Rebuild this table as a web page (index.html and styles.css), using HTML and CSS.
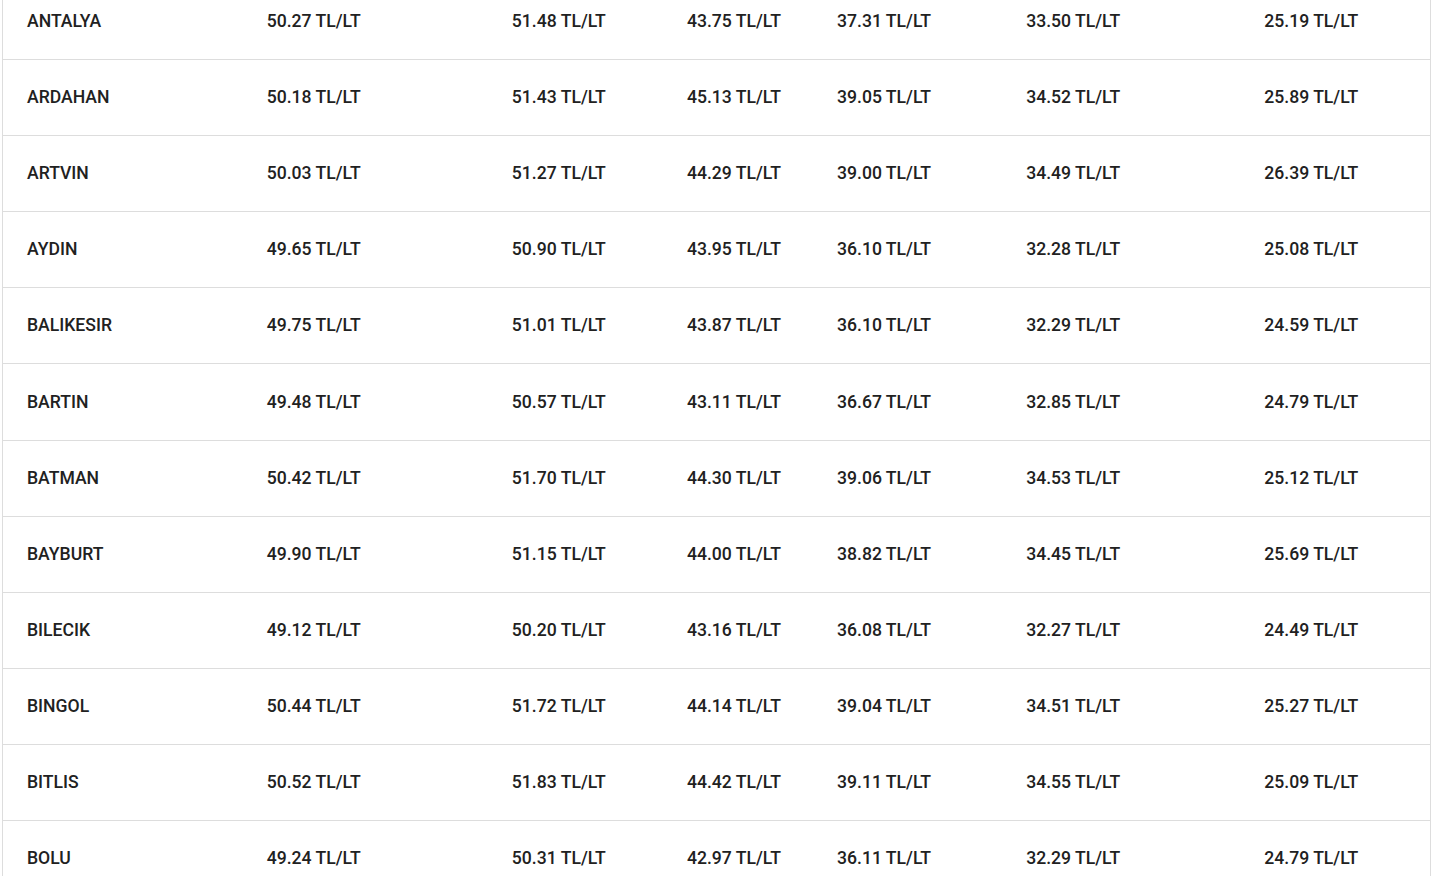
FILE: index.html
```html
<!DOCTYPE html>
<html lang="tr">
<head>
<meta charset="utf-8">
<title>Akaryakıt Fiyatları</title>
<link rel="stylesheet" href="styles.css">
</head>
<body>
<div class="wrap">
<table class="prices">
<colgroup>
<col class="c1"><col class="c2"><col class="c3"><col class="c4"><col class="c5"><col class="c6"><col class="c7">
</colgroup>
<tbody>
<tr><td>ANTALYA</td><td>50.27 TL/LT</td><td>51.48 TL/LT</td><td>43.75 TL/LT</td><td>37.31 TL/LT</td><td>33.50 TL/LT</td><td>25.19 TL/LT</td></tr>
<tr><td>ARDAHAN</td><td>50.18 TL/LT</td><td>51.43 TL/LT</td><td>45.13 TL/LT</td><td>39.05 TL/LT</td><td>34.52 TL/LT</td><td>25.89 TL/LT</td></tr>
<tr><td>ARTVIN</td><td>50.03 TL/LT</td><td>51.27 TL/LT</td><td>44.29 TL/LT</td><td>39.00 TL/LT</td><td>34.49 TL/LT</td><td>26.39 TL/LT</td></tr>
<tr><td>AYDIN</td><td>49.65 TL/LT</td><td>50.90 TL/LT</td><td>43.95 TL/LT</td><td>36.10 TL/LT</td><td>32.28 TL/LT</td><td>25.08 TL/LT</td></tr>
<tr><td>BALIKESIR</td><td>49.75 TL/LT</td><td>51.01 TL/LT</td><td>43.87 TL/LT</td><td>36.10 TL/LT</td><td>32.29 TL/LT</td><td>24.59 TL/LT</td></tr>
<tr><td>BARTIN</td><td>49.48 TL/LT</td><td>50.57 TL/LT</td><td>43.11 TL/LT</td><td>36.67 TL/LT</td><td>32.85 TL/LT</td><td>24.79 TL/LT</td></tr>
<tr><td>BATMAN</td><td>50.42 TL/LT</td><td>51.70 TL/LT</td><td>44.30 TL/LT</td><td>39.06 TL/LT</td><td>34.53 TL/LT</td><td>25.12 TL/LT</td></tr>
<tr><td>BAYBURT</td><td>49.90 TL/LT</td><td>51.15 TL/LT</td><td>44.00 TL/LT</td><td>38.82 TL/LT</td><td>34.45 TL/LT</td><td>25.69 TL/LT</td></tr>
<tr><td>BILECIK</td><td>49.12 TL/LT</td><td>50.20 TL/LT</td><td>43.16 TL/LT</td><td>36.08 TL/LT</td><td>32.27 TL/LT</td><td>24.49 TL/LT</td></tr>
<tr><td>BINGOL</td><td>50.44 TL/LT</td><td>51.72 TL/LT</td><td>44.14 TL/LT</td><td>39.04 TL/LT</td><td>34.51 TL/LT</td><td>25.27 TL/LT</td></tr>
<tr><td>BITLIS</td><td>50.52 TL/LT</td><td>51.83 TL/LT</td><td>44.42 TL/LT</td><td>39.11 TL/LT</td><td>34.55 TL/LT</td><td>25.09 TL/LT</td></tr>
<tr><td>BOLU</td><td>49.24 TL/LT</td><td>50.31 TL/LT</td><td>42.97 TL/LT</td><td>36.11 TL/LT</td><td>32.29 TL/LT</td><td>24.79 TL/LT</td></tr>
</tbody>
</table>
</div>
</body>
</html>
```

FILE: styles.css
```css
html, body {
  margin: 0;
  padding: 0;
  background: #ffffff;
  overflow: hidden;
}
body {
  font-family: Roboto, "Liberation Sans", Arial, sans-serif;
  color: #212121;
}
.wrap {
  margin: -16px 5px 0 2px;
}
.prices {
  width: 1429px;
  border-collapse: collapse;
  table-layout: fixed;
  border-left: 1px solid #dddddd;
  border-right: 1px solid #dddddd;
}
.c1 { width: 240px; }
.c2 { width: 245px; }
.c3 { width: 175px; }
.c4 { width: 150px; }
.c5 { width: 189px; }
.c6 { width: 238px; }
.c7 { width: 190px; }
.prices td {
  height: 75.1px;
  padding: 0 0 0 24px;
  vertical-align: middle;
  font-size: 17.6px;
  font-weight: 500;
  line-height: 21px;
  border-bottom: 1px solid #dddddd;
  white-space: nowrap;
}
```
